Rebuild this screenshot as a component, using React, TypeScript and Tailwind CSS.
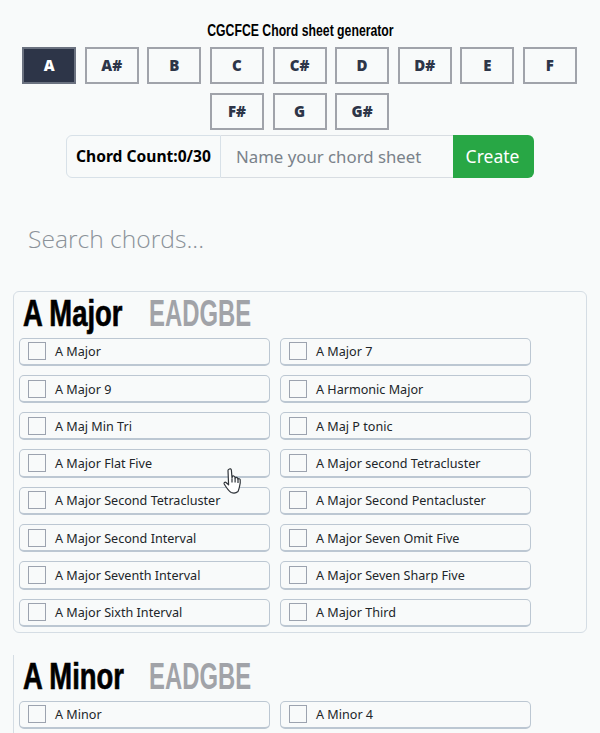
const keys1 = ["A", "A#", "B", "C", "C#", "D", "D#", "E", "F"];
const keys2 = ["F#", "G", "G#"];
const major = ["A Major", "A Major 7", "A Major 9", "A Harmonic Major", "A Maj Min Tri", "A Maj P tonic", "A Major Flat Five", "A Major second Tetracluster", "A Major Second Tetracluster", "A Major Second Pentacluster", "A Major Second Interval", "A Major Seven Omit Five", "A Major Seventh Interval", "A Major Seven Sharp Five", "A Major Sixth Interval", "A Major Third"];
const minor = ["A Minor", "A Minor 4"];

function Key({ k }: { k: string }) {
  const active = k === "A";
  return (
    <div className={`w-[54px] h-[37px] flex items-center justify-center border-2 text-[15px] font-black ${active ? "bg-[#2d3548] border-[#6b7280] text-white" : "border-[#a0a3aa] text-[#2d3548]"}`}>
      {k}
    </div>
  );
}

function Item({ label }: { label: string }) {
  return (
    <div className="w-[251px] h-[28.3px] mb-[9px] flex items-center border border-[#bcc7d2] rounded-[5px] pl-[8px] border-b-2">
      <span className="w-[18px] h-[18px] border border-[#9ca3af] mr-[9px] shrink-0" />
      <span className="text-[12.6px] leading-[18px] pt-[2px] text-[#212529]">{label}</span>
    </div>
  );
}

function Section({ title, items, cls }: { title: string; items: string[]; cls: string }) {
  return (
    <section className={`mx-[13px] pl-[5px] border border-[#d5dde4] rounded-[6px] ${cls}`}>
      <div className="flex h-[44px] pl-[4px] font-['Liberation_Sans',sans-serif] text-[37px] leading-[44px] font-bold">
        <span className="w-[126px] shrink-0 whitespace-nowrap">
          <span className="inline-block origin-left scale-x-[0.74] text-black [-webkit-text-stroke:0.7px_black]">{title}</span>
        </span>
        <span className="inline-block origin-left scale-x-[0.645] text-[#a1a3a8] whitespace-nowrap">EADGBE</span>
      </div>
      <div className="grid grid-cols-[251px_251px] gap-x-[10px] pt-[1.6px]">
        {items.map((i) => <Item key={i} label={i} />)}
      </div>
    </section>
  );
}

function Hand() {
  return (
    <svg className="absolute left-[221px] top-[467px]" width="24" height="30" viewBox="0 0 24 30" fill="#fff" stroke="#2f343a" strokeWidth="1.2" strokeLinejoin="round">
      <path d="M8 2.200c1-.9 2.300-.3 2.400 1L11 11l.4-1.500c.8-.9 2-.6 2.400.3l.3 1.200c.6-.9 2-.8 2.500.2l.3.8c.8-.6 2-.3 2.300.7.3 2-.1 5-.8 7.500-.4 1.500-.8 3.300-1.400 4.300-1.500 1.300-4.600 1.800-6.800 1-2.500-1.500-5.500-6-7-8.500-.6-1.200.7-2.300 1.800-1.500l2.600 2.300L7 3.500c0-.5.400-1 1-1.300z" />
      <path d="M11 11.500v4M14.100 11v4.500M17 12v4" fill="none" />
    </svg>
  );
}

export default function App() {
  return (
    <div className="relative w-[600px] h-[733px] overflow-hidden bg-[#f8fafa] font-['Noto_Sans','Open_Sans',sans-serif] text-[#212529]">
      <h1 className="pt-[22px] h-[47px] text-center font-['Liberation_Sans',sans-serif] text-[17px] leading-[18px] font-bold text-black whitespace-nowrap">
        <span className="inline-block scale-x-[0.72]">CGCFCE Chord sheet generator</span>
      </h1>
      <div className="flex flex-wrap justify-center gap-x-[8.6px] gap-y-[9px] pl-[21px] pr-[22px]">
        {keys1.map((k) => <Key key={k} k={k} />)}
        {keys2.map((k) => <Key key={k} k={k} />)}
      </div>
      <div className="mx-[66px] mt-[5px] h-[43px] w-[468px] flex">
        <div className="w-[155px] flex items-center justify-center border border-[#d8e1e8] rounded-l-[6px] text-[15.6px] font-bold text-black">Chord Count:0/30</div>
        <div className="w-[232px] flex items-center pl-[15px] border-y border-[#d8dde2] text-[16.8px] text-[#7a828a]">Name your chord sheet</div>
        <div className="w-[81px] flex items-center justify-center pr-[2px] bg-[#28a745] rounded-r-[6px] text-[17.5px] text-white">Create</div>
      </div>
      <div className="h-[113px] pl-[28px] pt-[43px] text-[24.6px] leading-[36px] font-light text-[#8b9299] font-['Open_Sans',sans-serif]">Search chords...</div>
      <Section title="A Major" items={major} cls="h-[342px]" />
      <Section title="A Minor" items={minor} cls="mt-[22px] h-[120px] border-r-0 border-t-0 border-b-0 rounded-none" />
      <Hand />
    </div>
  );
}
